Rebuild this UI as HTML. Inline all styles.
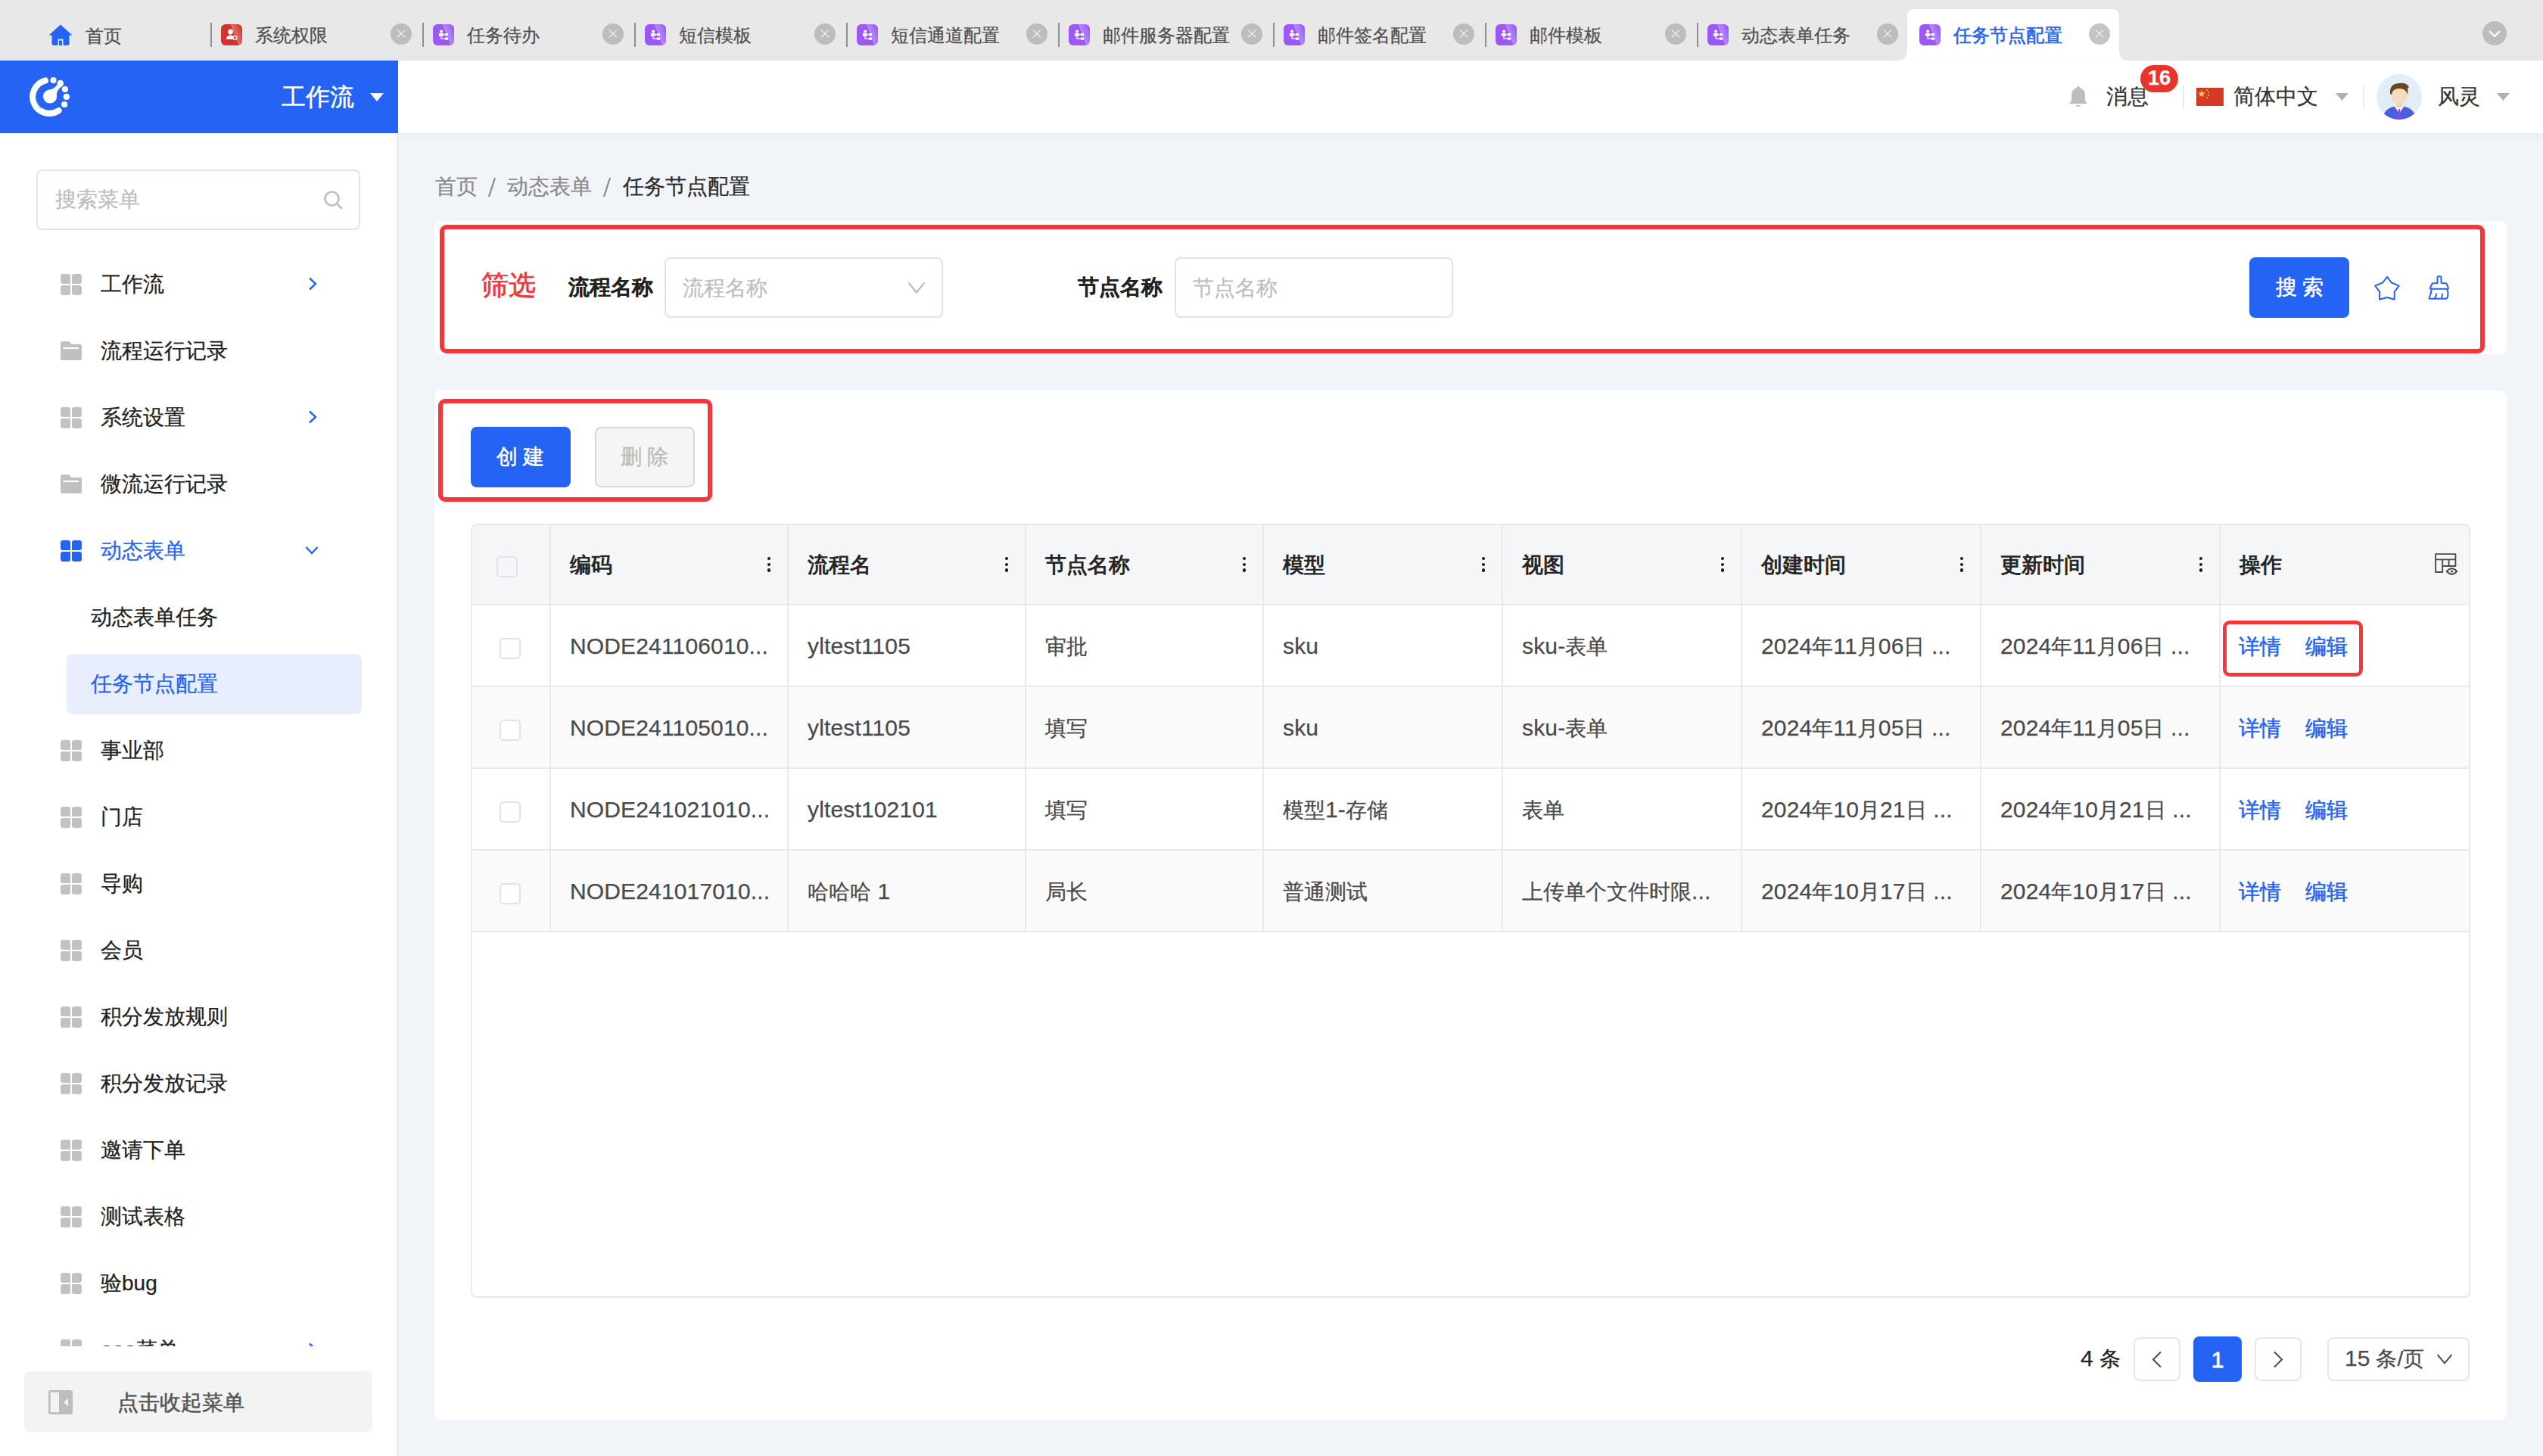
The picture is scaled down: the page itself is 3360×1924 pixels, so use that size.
<!DOCTYPE html>
<html><head><meta charset="utf-8"><style>
*{box-sizing:border-box;margin:0;padding:0}
html,body{width:3360px;height:1924px;overflow:hidden;background:#f1f4f8;font-family:"Liberation Sans",sans-serif;color:#222;position:relative;-webkit-text-stroke-width:0.25px}
.a{position:absolute}
.t{position:absolute;white-space:nowrap;line-height:1}
.sep{position:absolute;top:30px;width:2px;height:32px;background:#8f8f8f}
.ticon{position:absolute;top:32px;width:28px;height:28px;border-radius:6px;overflow:hidden}
.ttxt{position:absolute;top:35px;font-size:24px;line-height:1;color:#505050;white-space:nowrap}
.close{position:absolute;top:31px;width:28px;height:28px;border-radius:50%;background:#bdbdbd}
.close:before,.close:after{content:"";position:absolute;left:7px;top:13.4px;width:14px;height:1.2px;background:rgba(255,255,255,0.92);transform:rotate(45deg)}
.close:after{transform:rotate(-45deg)}
.mtx{position:absolute;font-size:28px;line-height:1;color:#222;white-space:nowrap}
.grid{position:absolute;width:28px;height:28px}
.grid i{position:absolute;width:13px;height:13px;background:#c2c2c2;border-radius:3px}
.card{position:absolute;background:#fff;border-radius:8px}
.redbox{position:absolute;border:6px solid #f7363b;border-radius:9px}
.inp{position:absolute;border:2px solid #dfe3ea;border-radius:8px;background:#fff}
.ph{position:absolute;font-size:28px;line-height:1;color:#bdbdbd;white-space:nowrap}
.hl{position:absolute;height:2px;background:#e8e9ed}
.vl{position:absolute;width:2px;background:#e8e9ed}
.cb{position:absolute;width:28px;height:28px;border:2px solid #e0e3eb;border-radius:5px;background:#fff}
.th{position:absolute;top:733px;font-size:28px;line-height:1;font-weight:bold;color:#262626;white-space:nowrap;-webkit-text-stroke-width:0}
.dots{position:absolute;top:736px;width:4.4px;height:20px}
.dots i{position:absolute;left:0;width:4.4px;height:4.4px;border-radius:50%;background:#1a1a1a}
.td{position:absolute;font-size:28px;line-height:1;color:#4a4a4a;white-space:nowrap}
.lat{font-size:30px;letter-spacing:0.15px;position:relative;top:0px;line-height:0}
.lnk{position:absolute;font-size:28px;line-height:1;color:#2563f5;white-space:nowrap;-webkit-text-stroke-width:0.55px}
.pg{position:absolute;top:1767px;height:58px;border:2px solid #e3e6ec;border-radius:8px;background:#fff}
</style></head><body>
<div class="a" style="left:0;top:0;width:3360px;height:80px;background:#e8e8e8"></div>
<svg class="a" style="left:64px;top:32px" width="32" height="28" viewBox="0 0 32 28">
<path d="M16 0.5 L31.5 14.5 L27.5 14.5 L27.5 25.5 Q27.5 28 25 28 L19.5 28 L19.5 19.5 L12.5 19.5 L12.5 28 L7 28 Q4.5 28 4.5 25.5 L4.5 14.5 L0.5 14.5 Z" fill="#2563f5"/>
<rect x="14" y="21.5" width="4" height="6.5" fill="#2563f5"/></svg>
<div class="ttxt" style="left:113px;top:36px">首页</div>
<div class="sep" style="left:278px"></div>
<div class="ticon" style="left:292px;background:linear-gradient(69deg,#d4322d 0%,#d4322d 60%,#e0716d 61%,#d94f4a 80%,#d4322d 92%)"><svg class="a" style="left:0;top:0" width="28" height="28" viewBox="0 0 28 28">
<circle cx="12.5" cy="10" r="3.4" fill="#fff"/>
<path d="M7 20 Q7 14.5 12.5 14.5 Q15 14.5 16.5 15.8 L16.5 20 Z" fill="#fff"/>
<circle cx="18.5" cy="18" r="2.3" fill="none" stroke="#fff" stroke-width="1.3"/>
</svg></div>
<div class="ttxt" style="left:337px">系统权限</div>
<div class="close" style="left:516px"></div>
<div class="sep" style="left:558px"></div>
<div class="ticon" style="left:572px;background:linear-gradient(69deg,#9d57f6 0%,#9d57f6 60%,#b588f8 61%,#a870f7 80%,#9d57f6 92%)"><svg class="a" style="left:0;top:0" width="28" height="28" viewBox="0 0 28 28">
<circle cx="11.1" cy="9.4" r="2" fill="#fff"/>
<rect x="7.9" y="11.9" width="6.2" height="3.9" rx="0.6" fill="#fff"/>
<path d="M14 13.2 L16 13.2 L16 14.4 L14 14.4 Z" fill="#fff" opacity="0.8"/>
<rect x="15.9" y="12" width="4.2" height="3.2" rx="0.6" fill="#fff"/>
<path d="M10.2 15.8 L11.8 15.8 L11.8 18.3 L16 18.3 L16 19.8 L10.2 19.8 Z" fill="#fff" opacity="0.8"/>
<rect x="15.9" y="17.4" width="4.2" height="3.4" rx="0.6" fill="#fff"/>
</svg></div>
<div class="ttxt" style="left:617px">任务待办</div>
<div class="close" style="left:796px"></div>
<div class="sep" style="left:838px"></div>
<div class="ticon" style="left:852px;background:linear-gradient(69deg,#9d57f6 0%,#9d57f6 60%,#b588f8 61%,#a870f7 80%,#9d57f6 92%)"><svg class="a" style="left:0;top:0" width="28" height="28" viewBox="0 0 28 28">
<circle cx="11.1" cy="9.4" r="2" fill="#fff"/>
<rect x="7.9" y="11.9" width="6.2" height="3.9" rx="0.6" fill="#fff"/>
<path d="M14 13.2 L16 13.2 L16 14.4 L14 14.4 Z" fill="#fff" opacity="0.8"/>
<rect x="15.9" y="12" width="4.2" height="3.2" rx="0.6" fill="#fff"/>
<path d="M10.2 15.8 L11.8 15.8 L11.8 18.3 L16 18.3 L16 19.8 L10.2 19.8 Z" fill="#fff" opacity="0.8"/>
<rect x="15.9" y="17.4" width="4.2" height="3.4" rx="0.6" fill="#fff"/>
</svg></div>
<div class="ttxt" style="left:897px">短信模板</div>
<div class="close" style="left:1076px"></div>
<div class="sep" style="left:1118px"></div>
<div class="ticon" style="left:1132px;background:linear-gradient(69deg,#9d57f6 0%,#9d57f6 60%,#b588f8 61%,#a870f7 80%,#9d57f6 92%)"><svg class="a" style="left:0;top:0" width="28" height="28" viewBox="0 0 28 28">
<circle cx="11.1" cy="9.4" r="2" fill="#fff"/>
<rect x="7.9" y="11.9" width="6.2" height="3.9" rx="0.6" fill="#fff"/>
<path d="M14 13.2 L16 13.2 L16 14.4 L14 14.4 Z" fill="#fff" opacity="0.8"/>
<rect x="15.9" y="12" width="4.2" height="3.2" rx="0.6" fill="#fff"/>
<path d="M10.2 15.8 L11.8 15.8 L11.8 18.3 L16 18.3 L16 19.8 L10.2 19.8 Z" fill="#fff" opacity="0.8"/>
<rect x="15.9" y="17.4" width="4.2" height="3.4" rx="0.6" fill="#fff"/>
</svg></div>
<div class="ttxt" style="left:1177px">短信通道配置</div>
<div class="close" style="left:1356px"></div>
<div class="sep" style="left:1398px"></div>
<div class="ticon" style="left:1412px;background:linear-gradient(69deg,#9d57f6 0%,#9d57f6 60%,#b588f8 61%,#a870f7 80%,#9d57f6 92%)"><svg class="a" style="left:0;top:0" width="28" height="28" viewBox="0 0 28 28">
<circle cx="11.1" cy="9.4" r="2" fill="#fff"/>
<rect x="7.9" y="11.9" width="6.2" height="3.9" rx="0.6" fill="#fff"/>
<path d="M14 13.2 L16 13.2 L16 14.4 L14 14.4 Z" fill="#fff" opacity="0.8"/>
<rect x="15.9" y="12" width="4.2" height="3.2" rx="0.6" fill="#fff"/>
<path d="M10.2 15.8 L11.8 15.8 L11.8 18.3 L16 18.3 L16 19.8 L10.2 19.8 Z" fill="#fff" opacity="0.8"/>
<rect x="15.9" y="17.4" width="4.2" height="3.4" rx="0.6" fill="#fff"/>
</svg></div>
<div class="ttxt" style="left:1457px">邮件服务器配置</div>
<div class="close" style="left:1640px"></div>
<div class="sep" style="left:1682px"></div>
<div class="ticon" style="left:1696px;background:linear-gradient(69deg,#9d57f6 0%,#9d57f6 60%,#b588f8 61%,#a870f7 80%,#9d57f6 92%)"><svg class="a" style="left:0;top:0" width="28" height="28" viewBox="0 0 28 28">
<circle cx="11.1" cy="9.4" r="2" fill="#fff"/>
<rect x="7.9" y="11.9" width="6.2" height="3.9" rx="0.6" fill="#fff"/>
<path d="M14 13.2 L16 13.2 L16 14.4 L14 14.4 Z" fill="#fff" opacity="0.8"/>
<rect x="15.9" y="12" width="4.2" height="3.2" rx="0.6" fill="#fff"/>
<path d="M10.2 15.8 L11.8 15.8 L11.8 18.3 L16 18.3 L16 19.8 L10.2 19.8 Z" fill="#fff" opacity="0.8"/>
<rect x="15.9" y="17.4" width="4.2" height="3.4" rx="0.6" fill="#fff"/>
</svg></div>
<div class="ttxt" style="left:1741px">邮件签名配置</div>
<div class="close" style="left:1920px"></div>
<div class="sep" style="left:1962px"></div>
<div class="ticon" style="left:1976px;background:linear-gradient(69deg,#9d57f6 0%,#9d57f6 60%,#b588f8 61%,#a870f7 80%,#9d57f6 92%)"><svg class="a" style="left:0;top:0" width="28" height="28" viewBox="0 0 28 28">
<circle cx="11.1" cy="9.4" r="2" fill="#fff"/>
<rect x="7.9" y="11.9" width="6.2" height="3.9" rx="0.6" fill="#fff"/>
<path d="M14 13.2 L16 13.2 L16 14.4 L14 14.4 Z" fill="#fff" opacity="0.8"/>
<rect x="15.9" y="12" width="4.2" height="3.2" rx="0.6" fill="#fff"/>
<path d="M10.2 15.8 L11.8 15.8 L11.8 18.3 L16 18.3 L16 19.8 L10.2 19.8 Z" fill="#fff" opacity="0.8"/>
<rect x="15.9" y="17.4" width="4.2" height="3.4" rx="0.6" fill="#fff"/>
</svg></div>
<div class="ttxt" style="left:2021px">邮件模板</div>
<div class="close" style="left:2200px"></div>
<div class="sep" style="left:2242px"></div>
<div class="ticon" style="left:2256px;background:linear-gradient(69deg,#9d57f6 0%,#9d57f6 60%,#b588f8 61%,#a870f7 80%,#9d57f6 92%)"><svg class="a" style="left:0;top:0" width="28" height="28" viewBox="0 0 28 28">
<circle cx="11.1" cy="9.4" r="2" fill="#fff"/>
<rect x="7.9" y="11.9" width="6.2" height="3.9" rx="0.6" fill="#fff"/>
<path d="M14 13.2 L16 13.2 L16 14.4 L14 14.4 Z" fill="#fff" opacity="0.8"/>
<rect x="15.9" y="12" width="4.2" height="3.2" rx="0.6" fill="#fff"/>
<path d="M10.2 15.8 L11.8 15.8 L11.8 18.3 L16 18.3 L16 19.8 L10.2 19.8 Z" fill="#fff" opacity="0.8"/>
<rect x="15.9" y="17.4" width="4.2" height="3.4" rx="0.6" fill="#fff"/>
</svg></div>
<div class="ttxt" style="left:2301px">动态表单任务</div>
<div class="close" style="left:2480px"></div>
<svg class="a" style="left:2506px;top:12px" width="308" height="68" viewBox="0 0 308 68">
<path d="M0 68 Q14 68 14 54 L14 10 Q14 0 24 0 L284 0 Q294 0 294 10 L294 54 Q294 68 308 68 Z" fill="#fff"/></svg>
<div class="ticon" style="left:2536px;background:linear-gradient(69deg,#9d57f6 0%,#9d57f6 60%,#b588f8 61%,#a870f7 80%,#9d57f6 92%)"><svg class="a" style="left:0;top:0" width="28" height="28" viewBox="0 0 28 28">
<circle cx="11.1" cy="9.4" r="2" fill="#fff"/>
<rect x="7.9" y="11.9" width="6.2" height="3.9" rx="0.6" fill="#fff"/>
<path d="M14 13.2 L16 13.2 L16 14.4 L14 14.4 Z" fill="#fff" opacity="0.8"/>
<rect x="15.9" y="12" width="4.2" height="3.2" rx="0.6" fill="#fff"/>
<path d="M10.2 15.8 L11.8 15.8 L11.8 18.3 L16 18.3 L16 19.8 L10.2 19.8 Z" fill="#fff" opacity="0.8"/>
<rect x="15.9" y="17.4" width="4.2" height="3.4" rx="0.6" fill="#fff"/>
</svg></div>
<div class="ttxt" style="left:2581px;color:#2563f5;-webkit-text-stroke:0.6px #2563f5">任务节点配置</div>
<div class="close" style="left:2760px;background:#c4c4c4"></div>
<div class="a" style="left:3280px;top:28px;width:32px;height:32px;border-radius:50%;background:#bcbcbc"></div>
<svg class="a" style="left:3280px;top:28px" width="32" height="32" viewBox="0 0 32 32"><path d="M9 13 L16 20 L23 13" fill="none" stroke="#fff" stroke-width="2.2"/></svg>
<div class="a" style="left:526px;top:80px;width:2834px;height:96px;background:#fff;box-shadow:0 3px 12px rgba(0,0,0,0.05)"></div>
<div class="a" style="left:0;top:80px;width:526px;height:96px;background:#2563f5"></div>
<svg class="a" style="left:34px;top:96px" width="64" height="64" viewBox="0 0 64 64">
<defs><linearGradient id="lg" x1="0" y1="0" x2="0" y2="1"><stop offset="0" stop-color="#2563f5" stop-opacity="0"/><stop offset="0.55" stop-color="#2563f5" stop-opacity="0.22"/><stop offset="1" stop-color="#2563f5" stop-opacity="0.3"/></linearGradient></defs>
<path d="M25.9 10.5 A22 22 0 1 0 43.5 50.1" fill="none" stroke="#fff" stroke-width="8.2" stroke-linecap="round"/>
<path d="M17 22 A18.5 18.5 0 0 0 22 47" fill="none" stroke="url(#lg)" stroke-width="4"/>
<circle cx="32" cy="31.5" r="9.1" fill="#fff"/>
<path d="M29 22.9 C35 22.5 39 20 42 15 L48.5 18 C44 20.5 41 24 40.6 30 Z" fill="#fff"/>
<circle cx="45.7" cy="14.1" r="4.3" fill="#fff"/>
<circle cx="36.5" cy="10.1" r="4.1" fill="#fff"/>
<circle cx="51.9" cy="22" r="4.1" fill="#fff"/>
<circle cx="53.8" cy="31.9" r="4.1" fill="#fff"/>
<circle cx="51.2" cy="42" r="4.1" fill="#fff"/>
</svg>
<div class="t" style="left:372px;top:112px;font-size:32px;color:#fff;-webkit-text-stroke:0.5px #fff">工作流</div>
<svg class="a" style="left:489px;top:123px" width="18" height="11" viewBox="0 0 18 11"><path d="M0 0 L18 0 L9 11 Z" fill="#fff"/></svg>
<svg class="a" style="left:2732px;top:113px" width="28" height="30" viewBox="0 0 28 30">
<path d="M14 1 Q16 1 16 3 Q23 5 23 13 L23 20 L26 24 L2 24 L5 20 L5 13 Q5 5 12 3 Q12 1 14 1 Z" fill="#bdbdbd"/>
<path d="M10 26 Q14 30 18 26 Z" fill="#bdbdbd"/></svg>
<div class="t" style="left:2783px;top:114px;font-size:28px;color:#333">消息</div>
<div class="a" style="left:2828px;top:86px;width:50px;height:36px;border-radius:18px;background:#e8352b"></div>
<div class="t" style="left:2828px;top:90px;width:50px;text-align:center;font-size:27px;color:#fff;font-weight:bold">16</div>
<div class="a" style="left:2884px;top:112px;width:2px;height:32px;background:#ececec"></div>
<svg class="a" style="left:2902px;top:116px" width="36" height="24" viewBox="0 0 36 24">
<rect width="36" height="24" fill="#d33a25"/>
<polygon points="7,3 8.2,6.5 12,6.5 9,8.7 10.1,12.2 7,10 3.9,12.2 5,8.7 2,6.5 5.8,6.5" fill="#f5d34a"/>
<circle cx="14" cy="3" r="1" fill="#f5d34a"/><circle cx="16" cy="6" r="1" fill="#f5d34a"/><circle cx="16" cy="10" r="1" fill="#f5d34a"/><circle cx="14" cy="13" r="1" fill="#f5d34a"/>
</svg>
<div class="t" style="left:2951px;top:114px;font-size:28px;color:#333">简体中文</div>
<svg class="a" style="left:3086px;top:123px" width="17" height="10" viewBox="0 0 17 10"><path d="M0 0 L17 0 L8.5 10 Z" fill="#b0b0b0"/></svg>
<div class="a" style="left:3122px;top:112px;width:2px;height:32px;background:#ececec"></div>
<svg class="a" style="left:3140px;top:98px" width="60" height="60" viewBox="0 0 60 60">
<defs><clipPath id="av"><circle cx="30" cy="30" r="30"/></clipPath></defs>
<circle cx="30" cy="30" r="30" fill="#e1eef8"/>
<g clip-path="url(#av)">
<path d="M8 58 Q10 46 22 43 L38 43 Q50 46 52 58 L52 62 L8 62 Z" fill="#4a5ee0"/>
<path d="M24 43 L30 52 L36 43 Z" fill="#fff"/>
<path d="M29 46 L31 46 L32 56 L30 58 L28 56 Z" fill="#7b4fe0"/>
<rect x="26" y="36" width="8" height="8" fill="#f3d3b5"/>
<ellipse cx="30" cy="27" rx="11" ry="12" fill="#f6dbc0"/>
<path d="M18 26 Q17 12 30 12 Q40 11 43 17 L41 19 Q42 24 41 27 Q39 19 30 19 Q21 19 20 27 Z" fill="#6b4423"/>
</g></svg>
<div class="t" style="left:3221px;top:114px;font-size:28px;color:#333">风灵</div>
<svg class="a" style="left:3299px;top:123px" width="17" height="10" viewBox="0 0 17 10"><path d="M0 0 L17 0 L8.5 10 Z" fill="#b0b0b0"/></svg>
<div class="a" style="left:0;top:176px;width:526px;height:1748px;background:#fff"></div>
<div class="a" style="left:524px;top:176px;width:3px;height:1748px;background:#e9edf3"></div>
<div class="inp" style="left:48px;top:224px;width:428px;height:80px;border-color:#e0e4ec"></div>
<div class="ph" style="left:73px;top:250px">搜索菜单</div>
<svg class="a" style="left:426px;top:250px" width="28" height="28" viewBox="0 0 28 28">
<circle cx="12.5" cy="12.5" r="9" fill="none" stroke="#bdbdbd" stroke-width="2.6"/>
<path d="M20 20 L25 25" stroke="#bdbdbd" stroke-width="2.6" stroke-linecap="round"/></svg>
<div class="a" style="left:0;top:176px;width:524px;height:1603px;overflow:hidden">
<div class="a" style="left:0;top:-176px;width:524px;height:1924px">
<div class="grid" style="left:80px;top:362px"><i style="left:0;top:0;background:#c2c2c2;border-bottom-right-radius:0"></i><i style="left:15px;top:0;background:#c2c2c2;border-bottom-left-radius:0"></i><i style="left:0;top:15px;background:#c2c2c2;border-top-right-radius:0"></i><i style="left:15px;top:15px;background:#c2c2c2;border-top-left-radius:0"></i></div>
<div class="mtx" style="left:133px;top:362px;color:#222">工作流</div>
<svg class="a" style="left:407px;top:366px" width="12" height="18" viewBox="0 0 12 18"><path d="M2 1.5 L10 9 L2 16.5" fill="none" stroke="#2563f5" stroke-width="2.4"/></svg>
<svg class="a" style="left:80px;top:450px" width="28" height="28" viewBox="0 0 28 28"><path d="M0 3.2 Q0 1.2 2 1.2 L11.3 1.2 L14.4 5 L26 5 Q28 5 28 7 L28 24 Q28 26 26 26 L2 26 Q0 26 0 24 Z" fill="#c0c0c0"/><rect x="3.5" y="9" width="20.5" height="2.1" fill="#fff"/></svg>
<div class="mtx" style="left:133px;top:450px;color:#222">流程运行记录</div>
<div class="grid" style="left:80px;top:538px"><i style="left:0;top:0;background:#c2c2c2;border-bottom-right-radius:0"></i><i style="left:15px;top:0;background:#c2c2c2;border-bottom-left-radius:0"></i><i style="left:0;top:15px;background:#c2c2c2;border-top-right-radius:0"></i><i style="left:15px;top:15px;background:#c2c2c2;border-top-left-radius:0"></i></div>
<div class="mtx" style="left:133px;top:538px;color:#222">系统设置</div>
<svg class="a" style="left:407px;top:542px" width="12" height="18" viewBox="0 0 12 18"><path d="M2 1.5 L10 9 L2 16.5" fill="none" stroke="#2563f5" stroke-width="2.4"/></svg>
<svg class="a" style="left:80px;top:626px" width="28" height="28" viewBox="0 0 28 28"><path d="M0 3.2 Q0 1.2 2 1.2 L11.3 1.2 L14.4 5 L26 5 Q28 5 28 7 L28 24 Q28 26 26 26 L2 26 Q0 26 0 24 Z" fill="#c0c0c0"/><rect x="3.5" y="9" width="20.5" height="2.1" fill="#fff"/></svg>
<div class="mtx" style="left:133px;top:626px;color:#222">微流运行记录</div>
<div class="grid" style="left:80px;top:714px"><i style="left:0;top:0;background:#2563f5;border-bottom-right-radius:0"></i><i style="left:15px;top:0;background:#2563f5;border-bottom-left-radius:0"></i><i style="left:0;top:15px;background:#2563f5;border-top-right-radius:0"></i><i style="left:15px;top:15px;background:#2563f5;border-top-left-radius:0"></i></div>
<div class="mtx" style="left:133px;top:714px;color:#2563f5">动态表单</div>
<svg class="a" style="left:403px;top:721px" width="18" height="12" viewBox="0 0 18 12"><path d="M1.5 2 L9 10 L16.5 2" fill="none" stroke="#2563f5" stroke-width="2.4"/></svg>
<div class="mtx" style="left:120px;top:802px">动态表单任务</div>
<div class="a" style="left:88px;top:864px;width:390px;height:80px;border-radius:8px;background:#e8eefd"></div>
<div class="mtx" style="left:120px;top:890px;color:#2563f5">任务节点配置</div>
<div class="grid" style="left:80px;top:978px"><i style="left:0;top:0;background:#c2c2c2;border-bottom-right-radius:0"></i><i style="left:15px;top:0;background:#c2c2c2;border-bottom-left-radius:0"></i><i style="left:0;top:15px;background:#c2c2c2;border-top-right-radius:0"></i><i style="left:15px;top:15px;background:#c2c2c2;border-top-left-radius:0"></i></div>
<div class="mtx" style="left:133px;top:978px;color:#222">事业部</div>
<div class="grid" style="left:80px;top:1066px"><i style="left:0;top:0;background:#c2c2c2;border-bottom-right-radius:0"></i><i style="left:15px;top:0;background:#c2c2c2;border-bottom-left-radius:0"></i><i style="left:0;top:15px;background:#c2c2c2;border-top-right-radius:0"></i><i style="left:15px;top:15px;background:#c2c2c2;border-top-left-radius:0"></i></div>
<div class="mtx" style="left:133px;top:1066px;color:#222">门店</div>
<div class="grid" style="left:80px;top:1154px"><i style="left:0;top:0;background:#c2c2c2;border-bottom-right-radius:0"></i><i style="left:15px;top:0;background:#c2c2c2;border-bottom-left-radius:0"></i><i style="left:0;top:15px;background:#c2c2c2;border-top-right-radius:0"></i><i style="left:15px;top:15px;background:#c2c2c2;border-top-left-radius:0"></i></div>
<div class="mtx" style="left:133px;top:1154px;color:#222">导购</div>
<div class="grid" style="left:80px;top:1242px"><i style="left:0;top:0;background:#c2c2c2;border-bottom-right-radius:0"></i><i style="left:15px;top:0;background:#c2c2c2;border-bottom-left-radius:0"></i><i style="left:0;top:15px;background:#c2c2c2;border-top-right-radius:0"></i><i style="left:15px;top:15px;background:#c2c2c2;border-top-left-radius:0"></i></div>
<div class="mtx" style="left:133px;top:1242px;color:#222">会员</div>
<div class="grid" style="left:80px;top:1330px"><i style="left:0;top:0;background:#c2c2c2;border-bottom-right-radius:0"></i><i style="left:15px;top:0;background:#c2c2c2;border-bottom-left-radius:0"></i><i style="left:0;top:15px;background:#c2c2c2;border-top-right-radius:0"></i><i style="left:15px;top:15px;background:#c2c2c2;border-top-left-radius:0"></i></div>
<div class="mtx" style="left:133px;top:1330px;color:#222">积分发放规则</div>
<div class="grid" style="left:80px;top:1418px"><i style="left:0;top:0;background:#c2c2c2;border-bottom-right-radius:0"></i><i style="left:15px;top:0;background:#c2c2c2;border-bottom-left-radius:0"></i><i style="left:0;top:15px;background:#c2c2c2;border-top-right-radius:0"></i><i style="left:15px;top:15px;background:#c2c2c2;border-top-left-radius:0"></i></div>
<div class="mtx" style="left:133px;top:1418px;color:#222">积分发放记录</div>
<div class="grid" style="left:80px;top:1506px"><i style="left:0;top:0;background:#c2c2c2;border-bottom-right-radius:0"></i><i style="left:15px;top:0;background:#c2c2c2;border-bottom-left-radius:0"></i><i style="left:0;top:15px;background:#c2c2c2;border-top-right-radius:0"></i><i style="left:15px;top:15px;background:#c2c2c2;border-top-left-radius:0"></i></div>
<div class="mtx" style="left:133px;top:1506px;color:#222">邀请下单</div>
<div class="grid" style="left:80px;top:1594px"><i style="left:0;top:0;background:#c2c2c2;border-bottom-right-radius:0"></i><i style="left:15px;top:0;background:#c2c2c2;border-bottom-left-radius:0"></i><i style="left:0;top:15px;background:#c2c2c2;border-top-right-radius:0"></i><i style="left:15px;top:15px;background:#c2c2c2;border-top-left-radius:0"></i></div>
<div class="mtx" style="left:133px;top:1594px;color:#222">测试表格</div>
<div class="grid" style="left:80px;top:1682px"><i style="left:0;top:0;background:#c2c2c2;border-bottom-right-radius:0"></i><i style="left:15px;top:0;background:#c2c2c2;border-bottom-left-radius:0"></i><i style="left:0;top:15px;background:#c2c2c2;border-top-right-radius:0"></i><i style="left:15px;top:15px;background:#c2c2c2;border-top-left-radius:0"></i></div>
<div class="mtx" style="left:133px;top:1682px;color:#222">验bug</div>
<div class="grid" style="left:80px;top:1770px"><i style="left:0;top:0;background:#c2c2c2;border-bottom-right-radius:0"></i><i style="left:15px;top:0;background:#c2c2c2;border-bottom-left-radius:0"></i><i style="left:0;top:15px;background:#c2c2c2;border-top-right-radius:0"></i><i style="left:15px;top:15px;background:#c2c2c2;border-top-left-radius:0"></i></div>
<div class="mtx" style="left:133px;top:1770px;color:#222">ooo菜单</div>
<svg class="a" style="left:407px;top:1774px" width="12" height="18" viewBox="0 0 12 18"><path d="M2 1.5 L10 9 L2 16.5" fill="none" stroke="#2563f5" stroke-width="2.4"/></svg>
</div></div>
<div class="a" style="left:32px;top:1812px;width:460px;height:80px;border-radius:8px;background:#f3f3f3"></div>
<svg class="a" style="left:64px;top:1837px" width="32" height="32" viewBox="0 0 32 32">
<rect x="0" y="0" width="32" height="32" rx="3" fill="#bdbdbd"/>
<rect x="2.8" y="2.8" width="11.2" height="26.4" fill="#f3f3f3"/>
<path d="M26 10.8 L20 16 L26 21.2 Z" fill="#f3f3f3"/></svg>
<div class="t" style="left:155px;top:1840px;font-size:28px;color:#555;-webkit-text-stroke:0.5px #555">点击收起菜单</div>
<div class="t" style="left:575px;top:233px;font-size:28px;color:#8a8a8a">首页</div>
<svg class="a" style="left:640px;top:230px" width="20" height="34" viewBox="0 0 20 34"><path d="M14 5 L6 30" stroke="#8a8a8a" stroke-width="2.2"/></svg>
<div class="t" style="left:670px;top:233px;font-size:28px;color:#8a8a8a">动态表单</div>
<svg class="a" style="left:792px;top:230px" width="20" height="34" viewBox="0 0 20 34"><path d="M14 5 L6 30" stroke="#8a8a8a" stroke-width="2.2"/></svg>
<div class="t" style="left:823px;top:233px;font-size:28px;color:#2a2a2a">任务节点配置</div>
<div class="card" style="left:574px;top:292px;width:2738px;height:176px"></div>
<div class="redbox" style="left:581px;top:297px;width:2702px;height:170px"></div>
<div class="t" style="left:636px;top:359px;font-size:36px;color:#f5333a;-webkit-text-stroke-width:0.7px">筛选</div>
<div class="t" style="left:751px;top:366px;font-size:28px;font-weight:bold;color:#222;-webkit-text-stroke-width:0.1px">流程名称</div>
<div class="inp" style="left:878px;top:340px;width:368px;height:80px"></div>
<div class="ph" style="left:902px;top:367px">流程名称</div>
<svg class="a" style="left:1198px;top:370px" width="26" height="20" viewBox="0 0 26 20"><path d="M2.5 3.5 L13 16.5 L23.5 3.5" fill="none" stroke="#bbb" stroke-width="2.1"/></svg>
<div class="t" style="left:1424px;top:366px;font-size:28px;font-weight:bold;color:#222;-webkit-text-stroke-width:0.1px">节点名称</div>
<div class="inp" style="left:1552px;top:340px;width:368px;height:80px"></div>
<div class="ph" style="left:1576px;top:367px">节点名称</div>
<div class="a" style="left:2972px;top:340px;width:132px;height:80px;border-radius:8px;background:#2563f5"></div>
<div class="t" style="left:3007px;top:366px;font-size:28px;color:#fff;letter-spacing:7px;-webkit-text-stroke:0.5px #fff">搜索</div>
<svg class="a" style="left:3134px;top:362px" width="40" height="40" viewBox="0 0 40 40">
<path d="M20.1 3.9 L14.2 11.5 L4.2 15.7 L10.2 23.7 L9.9 33.7 L20 31 L29.7 33.7 L29.7 23.7 L35.7 15.7 L25.7 11.5 Z" fill="none" stroke="#2563f5" stroke-width="2" stroke-linejoin="round"/></svg>
<svg class="a" style="left:3206px;top:362px" width="34" height="36" viewBox="0 0 34 36">
<path d="M14.5 12.2 L14.5 4.3 Q14.5 3.2 15.6 3.2 L18.4 3.2 Q19.5 3.2 19.5 4.3 L19.5 11.4 Q19.5 12.2 20.4 12.2 L25 12.2 Q26 12.2 26.5 13 L29 18.6 Q29.3 19.7 28.2 19.7 L5.7 19.7 Q4.6 19.7 4.9 18.6 L7.4 13 Q7.9 12.2 8.9 12.2 Z" fill="none" stroke="#2563f5" stroke-width="2" stroke-linejoin="round"/>
<path d="M6.6 20.2 Q6.4 26.5 3.6 31.4 Q3.1 32.7 4.3 32.7 L25.5 32.7 Q27 32.7 27.7 31 Q29.6 25 27 20.2" fill="none" stroke="#2563f5" stroke-width="2" stroke-linejoin="round"/>
<path d="M13.3 26.4 Q12.8 30 10.5 32.4 M21 26.4 Q21 30 19.8 32.4" fill="none" stroke="#2563f5" stroke-width="2" stroke-linecap="round"/></svg>
<div class="card" style="left:574px;top:516px;width:2738px;height:1360px"></div>
<div class="redbox" style="left:579px;top:527px;width:362px;height:136px"></div>
<div class="a" style="left:622px;top:564px;width:132px;height:80px;border-radius:8px;background:#2563f5"></div>
<div class="t" style="left:656px;top:590px;font-size:28px;color:#fff;letter-spacing:7px;-webkit-text-stroke:0.5px #fff">创建</div>
<div class="a" style="left:786px;top:564px;width:132px;height:80px;border-radius:8px;background:#f5f5f5;border:2px solid #d9d9d9"></div>
<div class="t" style="left:820px;top:590px;font-size:28px;color:#bcbcbc;letter-spacing:7px;-webkit-text-stroke:0.4px #bcbcbc">删除</div>
<div class="a" style="left:622px;top:692px;width:2642px;height:1023px;border:2px solid #e8e9ed;border-radius:8px;background:#fff;overflow:hidden">
<div class="a" style="left:0;top:0;width:2642px;height:104px;background:#f5f6f8"></div>
<div class="a" style="left:0;top:214px;width:2642px;height:106px;background:#fafafa"></div>
<div class="a" style="left:0;top:430px;width:2642px;height:106px;background:#fafafa"></div>
</div>
<div class="hl" style="left:624px;top:798px;width:2638px"></div>
<div class="hl" style="left:624px;top:906px;width:2638px"></div>
<div class="hl" style="left:624px;top:1014px;width:2638px"></div>
<div class="hl" style="left:624px;top:1122px;width:2638px"></div>
<div class="hl" style="left:624px;top:1230px;width:2638px"></div>
<div class="vl" style="left:726px;top:694px;height:538px"></div>
<div class="vl" style="left:1040px;top:694px;height:538px"></div>
<div class="vl" style="left:1354px;top:694px;height:538px"></div>
<div class="vl" style="left:1668px;top:694px;height:538px"></div>
<div class="vl" style="left:1984px;top:694px;height:538px"></div>
<div class="vl" style="left:2300px;top:694px;height:538px"></div>
<div class="vl" style="left:2616px;top:694px;height:538px"></div>
<div class="vl" style="left:2932px;top:694px;height:538px"></div>
<div class="cb" style="left:656px;top:735px;background:transparent"></div>
<div class="th" style="left:753px">编码</div>
<div class="dots" style="left:1013.8px"><i style="top:0"></i><i style="top:7.6px"></i><i style="top:15.2px"></i></div>
<div class="th" style="left:1067px">流程名</div>
<div class="dots" style="left:1327.8px"><i style="top:0"></i><i style="top:7.6px"></i><i style="top:15.2px"></i></div>
<div class="th" style="left:1381px">节点名称</div>
<div class="dots" style="left:1641.8px"><i style="top:0"></i><i style="top:7.6px"></i><i style="top:15.2px"></i></div>
<div class="th" style="left:1695px">模型</div>
<div class="dots" style="left:1957.8px"><i style="top:0"></i><i style="top:7.6px"></i><i style="top:15.2px"></i></div>
<div class="th" style="left:2011px">视图</div>
<div class="dots" style="left:2273.8px"><i style="top:0"></i><i style="top:7.6px"></i><i style="top:15.2px"></i></div>
<div class="th" style="left:2327px">创建时间</div>
<div class="dots" style="left:2589.8px"><i style="top:0"></i><i style="top:7.6px"></i><i style="top:15.2px"></i></div>
<div class="th" style="left:2643px">更新时间</div>
<div class="dots" style="left:2905.8px"><i style="top:0"></i><i style="top:7.6px"></i><i style="top:15.2px"></i></div>
<div class="th" style="left:2959px">操作</div>
<svg class="a" style="left:3214px;top:728px" width="36" height="36" viewBox="0 0 36 36">
<path d="M4.1 4.1 H30.4 V20 H13.2 V28 H4.1 Z M4.1 11.4 H30.4 M13.2 11.4 V28 M21.6 11.4 V20" fill="none" stroke="#4a4a4a" stroke-width="1.9" stroke-linejoin="round"/>
<path d="M18.8 27 Q25.5 19.6 32.2 27 Q25.5 34.4 18.8 27 Z" fill="#f5f6f8" stroke="#4a4a4a" stroke-width="1.9" stroke-linejoin="round"/>
<circle cx="25.5" cy="27" r="1.6" fill="#4a4a4a"/></svg>
<div class="cb" style="left:660px;top:843px"></div>
<div class="td" style="left:753px;top:841px"><span class="lat">NODE241106010...</span></div>
<div class="td" style="left:1067px;top:841px"><span class="lat">yltest1105</span></div>
<div class="td" style="left:1381px;top:841px">审批</div>
<div class="td" style="left:1695px;top:841px"><span class="lat">sku</span></div>
<div class="td" style="left:2011px;top:841px"><span class="lat">sku-</span>表单</div>
<div class="td" style="left:2327px;top:841px"><span class="lat">2024</span>年<span class="lat">11</span>月<span class="lat">06</span>日<span class="lat"> ...</span></div>
<div class="td" style="left:2643px;top:841px"><span class="lat">2024</span>年<span class="lat">11</span>月<span class="lat">06</span>日<span class="lat"> ...</span></div>
<div class="lnk" style="left:2958px;top:841px">详情</div>
<div class="lnk" style="left:3046px;top:841px">编辑</div>
<div class="cb" style="left:660px;top:951px"></div>
<div class="td" style="left:753px;top:949px"><span class="lat">NODE241105010...</span></div>
<div class="td" style="left:1067px;top:949px"><span class="lat">yltest1105</span></div>
<div class="td" style="left:1381px;top:949px">填写</div>
<div class="td" style="left:1695px;top:949px"><span class="lat">sku</span></div>
<div class="td" style="left:2011px;top:949px"><span class="lat">sku-</span>表单</div>
<div class="td" style="left:2327px;top:949px"><span class="lat">2024</span>年<span class="lat">11</span>月<span class="lat">05</span>日<span class="lat"> ...</span></div>
<div class="td" style="left:2643px;top:949px"><span class="lat">2024</span>年<span class="lat">11</span>月<span class="lat">05</span>日<span class="lat"> ...</span></div>
<div class="lnk" style="left:2958px;top:949px">详情</div>
<div class="lnk" style="left:3046px;top:949px">编辑</div>
<div class="cb" style="left:660px;top:1059px"></div>
<div class="td" style="left:753px;top:1057px"><span class="lat">NODE241021010...</span></div>
<div class="td" style="left:1067px;top:1057px"><span class="lat">yltest102101</span></div>
<div class="td" style="left:1381px;top:1057px">填写</div>
<div class="td" style="left:1695px;top:1057px">模型<span class="lat">1-</span>存储</div>
<div class="td" style="left:2011px;top:1057px">表单</div>
<div class="td" style="left:2327px;top:1057px"><span class="lat">2024</span>年<span class="lat">10</span>月<span class="lat">21</span>日<span class="lat"> ...</span></div>
<div class="td" style="left:2643px;top:1057px"><span class="lat">2024</span>年<span class="lat">10</span>月<span class="lat">21</span>日<span class="lat"> ...</span></div>
<div class="lnk" style="left:2958px;top:1057px">详情</div>
<div class="lnk" style="left:3046px;top:1057px">编辑</div>
<div class="cb" style="left:660px;top:1167px"></div>
<div class="td" style="left:753px;top:1165px"><span class="lat">NODE241017010...</span></div>
<div class="td" style="left:1067px;top:1165px">哈哈哈<span class="lat"> 1</span></div>
<div class="td" style="left:1381px;top:1165px">局长</div>
<div class="td" style="left:1695px;top:1165px">普通测试</div>
<div class="td" style="left:2011px;top:1165px">上传单个文件时限<span class="lat">...</span></div>
<div class="td" style="left:2327px;top:1165px"><span class="lat">2024</span>年<span class="lat">10</span>月<span class="lat">17</span>日<span class="lat"> ...</span></div>
<div class="td" style="left:2643px;top:1165px"><span class="lat">2024</span>年<span class="lat">10</span>月<span class="lat">17</span>日<span class="lat"> ...</span></div>
<div class="lnk" style="left:2958px;top:1165px">详情</div>
<div class="lnk" style="left:3046px;top:1165px">编辑</div>
<div class="redbox" style="left:2937px;top:820px;width:185px;height:74px;border-width:5px"></div>
<div class="t" style="left:2749px;top:1782px;font-size:28px;color:#222"><span class="lat">4</span> 条</div>
<div class="pg" style="left:2819px;width:62px"></div>
<svg class="a" style="left:2840px;top:1785px" width="20" height="24" viewBox="0 0 20 24"><path d="M15 1.5 L5 11.5 L15 21.5" fill="none" stroke="#4a4a4a" stroke-width="2"/></svg>
<div class="a" style="left:2898px;top:1766px;width:64px;height:60px;border-radius:8px;background:#2563f5"></div>
<div class="t" style="left:2898px;top:1782px;width:64px;text-align:center;font-size:30px;color:#fff;-webkit-text-stroke:0.8px #fff">1</div>
<div class="pg" style="left:2979px;width:62px"></div>
<svg class="a" style="left:3000px;top:1785px" width="20" height="24" viewBox="0 0 20 24"><path d="M5 1.5 L15 11.5 L5 21.5" fill="none" stroke="#4a4a4a" stroke-width="2"/></svg>
<div class="pg" style="left:3075px;width:188px"></div>
<div class="t" style="left:3098px;top:1782px;font-size:28px;color:#4a4a4a"><span class="lat">15</span> 条/页</div>
<svg class="a" style="left:3219px;top:1788px" width="22" height="16" viewBox="0 0 22 16"><path d="M1.5 2 L11 13.5 L20.5 2" fill="none" stroke="#555" stroke-width="2"/></svg>
</body></html>
